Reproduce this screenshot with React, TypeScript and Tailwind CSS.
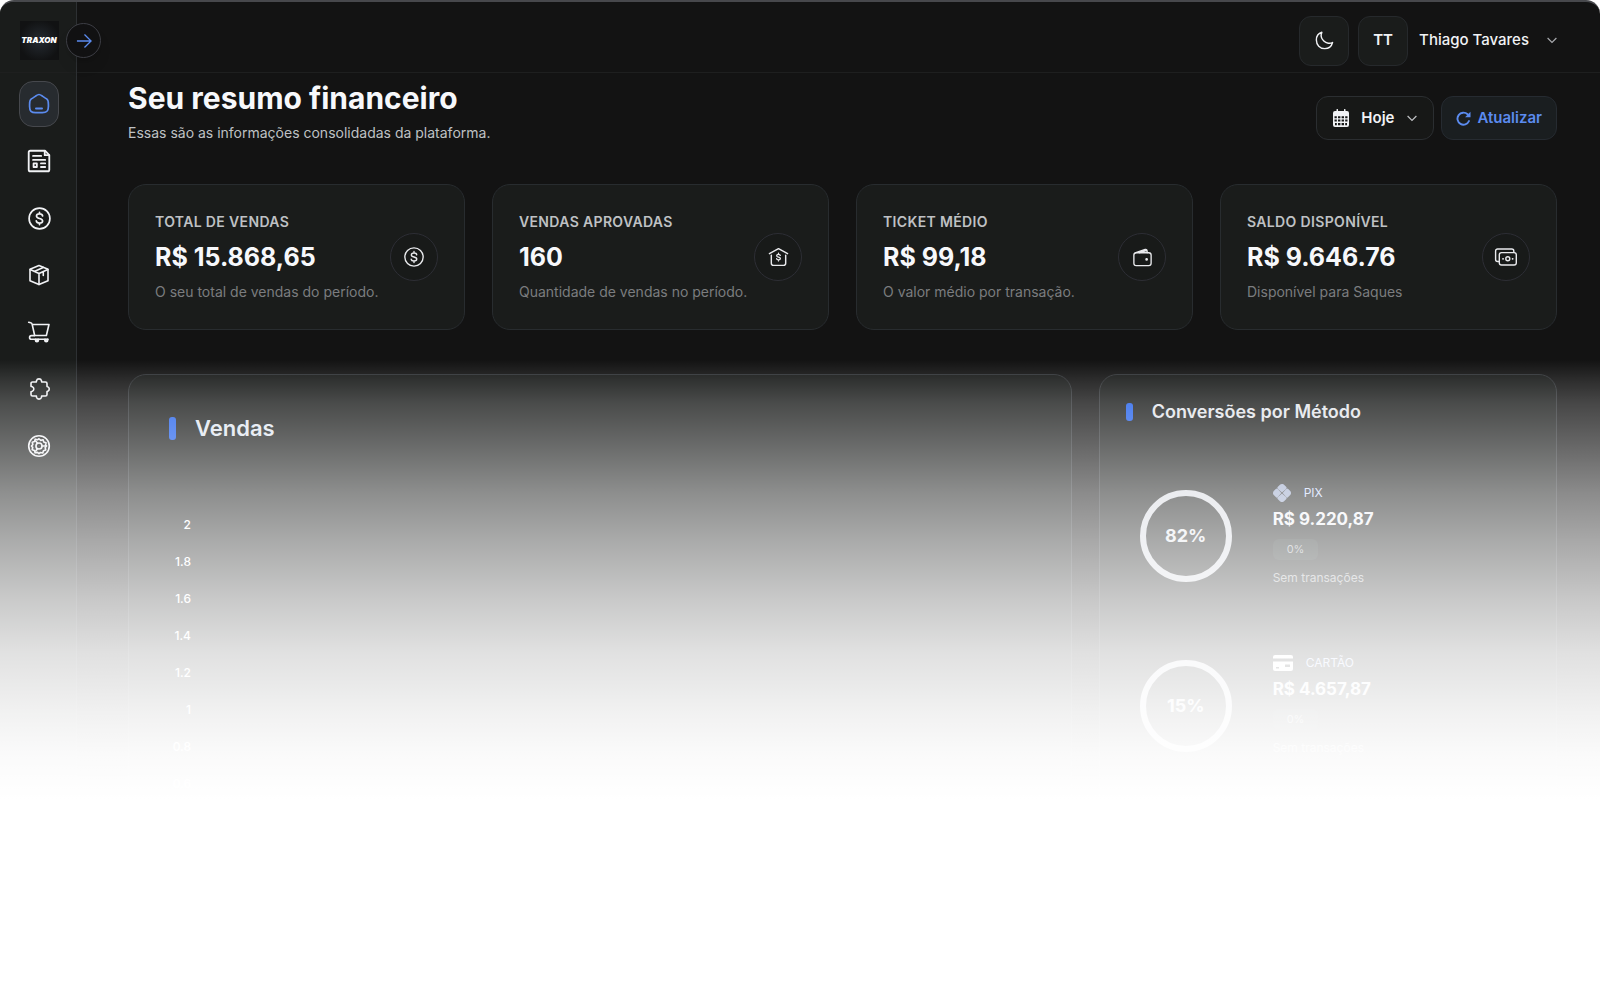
import type { ReactNode } from "react";

type IconProps = { size?: number; className?: string };

function Line({ size = 22, className, width = 1.5, children }: IconProps & { width?: number; children: ReactNode }) {
  return (
    <svg
      width={size}
      height={size}
      viewBox="0 0 24 24"
      fill="none"
      stroke="currentColor"
      strokeWidth={width}
      strokeLinecap="round"
      strokeLinejoin="round"
      className={className}
      aria-hidden="true"
    >
      {children}
    </svg>
  );
}

const HomeIcon = () => (
  <Line size={24} width={1.7}>
    <path d="M2.600 12.400c0-2.900 0-4 1.400-5.200.4-.4.8-.6 1.600-1.100l3-2c1.600-1.100 2.300-1.600 3.400-1.600s1.800.5 3.400 1.600l3 2c.8.500 1.200.7 1.600 1.100 1.400 1.200 1.400 2.300 1.400 5.200v2.200c0 4.500-1.600 6.100-6 6.100H8.600c-4.400 0-6-1.600-6-6.100z" />
    <path d="M9 16.600h6" strokeWidth={2} />
  </Line>
);

const ReportIcon = () => (
  <Line size={26} width={1.7}>
    <path d="M4 2.500h13.500l4 4V20a1.500 1.500 0 0 1-1.500 1.500H4A1.500 1.500 0 0 1 2.500 20V4A1.500 1.500 0 0 1 4 2.500z" />
    <path d="M17.300 2.700v3.900h4" />
    <path d="M6.500 7.300h7.500M6.500 11h11.200M13.800 14.200h3.900M13.800 17.500h3.900M7 14.200h3v3.300H7z" />
  </Line>
);

const DollarIcon = ({ size = 24, width = 1.6 }: { size?: number; width?: number }) => (
  <Line size={size} width={width}>
    <circle cx="12" cy="12" r="10" />
    <path d="M12 6v1.600m0 8.800V18M15 9.600c-.2-1.200-1.400-2-3-2s-2.900.7-2.900 2.100c0 1.500 1.300 1.900 2.900 2.300s3 .8 3 2.300c0 1.400-1.300 2.100-3 2.100s-2.900-.8-3.100-2.100" />
  </Line>
);

const BoxIcon = () => (
  <Line size={24} width={1.6}>
    <path d="M12 2.500l9 3.800v11.400l-9 3.900-9-3.900V6.300z" />
    <path d="M3.200 6.500L12 10.600l8.800-4.100M12 10.600v10.800M7.300 8.400l8.900-4M16.300 8.900v3.600" />
  </Line>
);

const CartIcon = () => (
  <Line size={26} width={1.5}>
    <path d="M2.500 3l1.800.5c.8.200 1.200.7 1.400 1.500L8 15.200h10.800l2.400-10.100H5.800" />
    <path d="M8 15.300H5a1.700 1.700 0 0 0 0 3.400h15.300" />
    <path d="M9 19v.6a1.100 1.100 0 0 0 2.200 0V19M17.600 19v.6a1.100 1.100 0 0 0 2.200 0V19" strokeWidth={2} />
  </Line>
);

const PuzzleIcon = () => (
  <Line size={24} width={1.6}>
    <path d="M4 6.500A1.500 1.500 0 0 1 5.500 5h3.700c.4-.3.200-.7.300-1.200a2.600 2.600 0 0 1 5 0c.1.500-.1.900.3 1.200h3.700A1.500 1.500 0 0 1 20 6.500v2.900c.2.400.7.300 1 .5a2.400 2.400 0 0 1 0 4.200c-.3.200-.8.100-1 .5v2.900a1.500 1.500 0 0 1-1.500 1.500h-3.700c-.4.300-.2.700-.3 1.200a2.600 2.600 0 0 1-5 0c-.1-.5.100-.9-.3-1.200H5.500A1.500 1.500 0 0 1 4 17.500v-2.700c.3-.4.800-.3 1.300-.5a2.500 2.500 0 0 0 0-4.600C4.800 9.500 4.300 9.600 4 9.200z" />
  </Line>
);

const GearIcon = () => (
  <Line size={26} width={1.5}>
    <circle cx="12" cy="12" r="9.500" />
    <path d="M12 5.300l1.600 1.500 2.200-.5.600 2.100 2.100.7-.5 2.200L19 12l-1.300 1.400.5 2.200-2.100.7-.6 2.100-2.200-.4L12 19l-1.400-1.100-2.200.4-.6-2.100-2.100-.7.5-2.200L5 12l1.300-1.300-.5-2.200 2.100-.7.600-2.100 2.100.6z" />
    <circle cx="12" cy="12" r="2.800" />
    <path d="M10.600 9.500L9 7.400M10.600 14.500L9 16.600M14.800 12h3" />
  </Line>
);

const HouseDollarIcon = () => (
  <Line size={23} width={1.5}>
    <path d="M2.500 8L12 2.800 21.500 8" />
    <path d="M4.500 9.500V18a2.200 2.200 0 0 0 2.200 2.200h10.600a2.200 2.200 0 0 0 2.200-2.200V9.500" />
    <path d="M12 7.400v1.200m0 5.800v1.200M13.900 9.900c-.2-.8-.9-1.200-1.900-1.200s-1.900.4-1.900 1.400.8 1.200 1.900 1.500 2 .5 2 1.500-.9 1.400-2 1.400-1.900-.5-2-1.300" strokeWidth={1.3} />
  </Line>
);

const WalletIcon = () => (
  <Line size={23} width={1.4}>
    <rect x="3" y="7" width="18" height="13.500" rx="2.500" />
    <path d="M5 7l9.800-3.400c.9-.3 1.700.2 1.900 1.100L17 7M9 7l7-2.300" />
    <circle cx="16.300" cy="14" r=".7" fill="currentColor" />
  </Line>
);

const CashIcon = () => (
  <Line size={24} width={1.4}>
    <rect x="5.300" y="7.600" width="17" height="12.400" rx="2.200" />
    <path d="M19.800 7.400V6a2 2 0 0 0-2-2H3.600a2 2 0 0 0-2 2v8.500a2 2 0 0 0 2 2h1.500" />
    <circle cx="13.800" cy="13.800" r="2" />
    <path d="M9 13.800h.1M18.600 13.800h.1" strokeWidth={1.8} />
  </Line>
);

const MoonIcon = () => (
  <Line size={21} width={1.6}>
    <path d="M21.200 14.300C18.500 15.800 14 15.500 11.200 12.700 8.600 10.100 7.500 6 9 2.600 5.200 3.700 2.700 7 2.700 11.500c0 5.500 4 9.800 9.500 9.800 4.300 0 7.900-2.700 9-7z" />
  </Line>
);

const Chevron = ({ className }: IconProps) => (
  <svg width="10" height="7" viewBox="0 0 10 7" fill="none" stroke="currentColor" strokeWidth="1.200" className={className} aria-hidden="true">
    <path d="M.6 1L5 5.400 9.400 1" />
  </svg>
);

const RefreshIcon = () => (
  <svg width="15" height="15" viewBox="0 0 15 15" fill="none" aria-hidden="true">
    <path d="M11.600 3.300A6 6 0 1 0 13 10" stroke="currentColor" strokeWidth="1.900" strokeLinecap="round" />
    <path d="M14.500.8v5.400H9.100z" fill="currentColor" />
  </svg>
);

const CalendarIcon = () => (
  <svg width="16" height="18" viewBox="0 0 16 18" aria-hidden="true">
    <path d="M2 2h1.500V.7a.7.7 0 0 1 1.500 0V2h6V.7a.7.7 0 0 1 1.500 0V2H14a2 2 0 0 1 2 2v12a2 2 0 0 1-2 2H2a2 2 0 0 1-2-2V4a2 2 0 0 1 2-2z" fill="currentColor" />
    <path d="M1.500 7.200h2.300v2H1.500zM5 7.200h2.400v2H5zM8.600 7.200H11v2H8.600zM12.200 7.200h2.300v2h-2.300zM1.500 10.600h2.300v2H1.500zM5 10.600h2.400v2H5zM8.600 10.600H11v2H8.600zM12.200 10.600h2.300v2h-2.300zM2 14h1.800v2.200H2zM5 14h2.400v2.200H5zM8.600 14H11v2.200H8.600zM12.200 14H14v2.200h-1.800z" fill="#161717" />
  </svg>
);

const PixIcon = () => (
  <svg width="18" height="18" viewBox="0 0 18 18" fill="#b4c6f2" fillOpacity="0.8" aria-hidden="true">
    <path d="M9 0c1 0 1.600.300 2.300 1l1.800 1.800c.7.700.7 1.500 0 2.200L9 8.500 4.900 5c-.7-.7-.7-1.500 0-2.200L6.700 1C7.400.3 8 0 9 0z" />
    <path d="M9 18c1 0 1.600-.3 2.300-1l1.800-1.800c.7-.7.7-1.500 0-2.200L9 9.500 4.900 13c-.7.700-.7 1.500 0 2.200L6.700 17c.7.700 1.300 1 2.300 1z" />
    <path d="M0 9c0-1 .3-1.600 1-2.300l1.800-1.800c.7-.7 1.300-.7 2 0L8.400 9l-3.600 4.100c-.7.700-1.300.7-2 0L1 11.300C.3 10.600 0 10 0 9z" />
    <path d="M18 9c0-1-.3-1.600-1-2.300l-1.800-1.800c-.7-.7-1.300-.7-2 0L9.600 9l3.600 4.100c.7.700 1.300.7 2 0l1.800-1.800c.7-.7 1-1.300 1-2.300z" />
  </svg>
);

const CardIcon = () => (
  <svg width="20" height="16" viewBox="0 0 20 16" fill="#ffffff" aria-hidden="true">
    <path d="M2 0h16a2 2 0 0 1 2 2v1.500H0V2a2 2 0 0 1 2-2z" />
    <path fillRule="evenodd" d="M0 6.500h20V14a2 2 0 0 1-2 2H2a2 2 0 0 1-2-2zm3 5.500v1.500h3V12zm9-2.500V12h5V9.500z" />
  </svg>
);

const navItems = [
  { label: "Início", icon: <HomeIcon />, active: true },
  { label: "Relatórios", icon: <ReportIcon /> },
  { label: "Financeiro", icon: <DollarIcon size={25} /> },
  { label: "Produtos", icon: <BoxIcon /> },
  { label: "Vendas", icon: <CartIcon /> },
  { label: "Integrações", icon: <PuzzleIcon /> },
  { label: "Configurações", icon: <GearIcon /> },
];

const stats = [
  { label: "TOTAL DE VENDAS", value: "R$ 15.868,65", note: "O seu total de vendas do período.", icon: <DollarIcon size={22} width={1.5} /> },
  { label: "VENDAS APROVADAS", value: "160", note: "Quantidade de vendas no período.", icon: <HouseDollarIcon /> },
  { label: "TICKET MÉDIO", value: "R$ 99,18", note: "O valor médio por transação.", icon: <WalletIcon /> },
  { label: "SALDO DISPONÍVEL", value: "R$ 9.646.76", note: "Disponível para Saques", icon: <CashIcon /> },
];

const methods = [
  { name: "PIX", percent: "82%", value: "R$ 9.220,87", icon: <PixIcon /> },
  { name: "CARTÃO", percent: "15%", value: "R$ 4.657,87", icon: <CardIcon /> },
];

const ticks = ["2", "1.8", "1.6", "1.4", "1.2", "1", "0.8", "0.6"];

function Sidebar() {
  return (
    <aside className="relative w-[77px] shrink-0 border-r border-[#2d3033] bg-[#1a1c1b]">
      <div className="flex h-[71px] items-center justify-center border-b border-[#1e1f1f] pt-[6px] pl-[2px]">
        <div className="flex size-[39px] items-center justify-center bg-[radial-gradient(circle,#252b31_0%,#111213_75%)] text-[8px] font-black text-white italic">
          TRAXON
        </div>
      </div>
      <button
        type="button"
        aria-label="Expandir menu"
        className="absolute top-[21px] -right-[25px] z-10 flex size-[35px] items-center justify-center rounded-full border border-[#3d3e45] bg-[#111112] text-[#5b8bef] shadow-lg"
      >
        <svg width="16" height="16" viewBox="0 0 17 17" fill="none" stroke="currentColor" strokeWidth="1.400" aria-hidden="true">
          <path d="M1 8.500h15M9 1.500l7 7-7 7" />
        </svg>
      </button>
      <nav className="flex flex-col items-center gap-[11px] pt-2 pl-[2px]">
        {navItems.map((item) => (
          <a
            key={item.label}
            href="#"
            aria-label={item.label}
            className={
              item.active
                ? "flex h-[46px] w-10 items-center justify-center rounded-[14px] border border-[#46484d] bg-[#272b2f] text-[#5b8bef]"
                : "flex h-[46px] w-10 items-center justify-center text-[#f1f2f5]"
            }
          >
            {item.icon}
          </a>
        ))}
      </nav>
    </aside>
  );
}

function Header() {
  return (
    <header className="flex h-[71px] items-center justify-end border-b border-[#1e1f1f] pt-[7px] pr-[43px]">
      <button
        type="button"
        aria-label="Alternar tema"
        className="mr-[9px] flex size-[50px] items-center justify-center rounded-xl border border-[#26292c] bg-[#1a1c1b] text-[#f1f2f5]"
      >
        <MoonIcon />
      </button>
      <button type="button" className="flex items-center text-[15px] font-medium text-[#f1f2f5]">
        <span className="flex size-[50px] items-center justify-center rounded-xl border border-[#26292c] bg-[#1a1c1b] font-semibold">
          TT
        </span>
        <span className="ml-[11px]">Thiago Tavares</span>
        <Chevron className="ml-[18px] text-[#a8aaae]" />
      </button>
    </header>
  );
}

function StatCard({ label, value, note, icon }: (typeof stats)[number]) {
  return (
    <article className="flex items-center justify-between rounded-[18px] border border-[#282c2f] bg-[#1a1c1b] px-[26px] py-[25px]">
      <div>
        <h2 className="text-[14px] leading-6 font-semibold tracking-wide text-[#bfc1c4]">{label}</h2>
        <p className="mt-1 text-[25px] leading-[38px] font-bold text-[#f7f8fb]">{value}</p>
        <p className="mt-1 text-[14px] leading-6 text-[#7b7c7f]">{note}</p>
      </div>
      <span className="flex size-12 shrink-0 items-center justify-center rounded-full border border-[#2d2e35] bg-[#181a19] text-[#e9eaed]">
        {icon}
      </span>
    </article>
  );
}

function SalesPanel() {
  return (
    <section className="col-span-8 rounded-[18px] border border-[#303336] bg-[#171918] px-10 pt-[39px] pb-[100px]">
      <div className="flex items-center gap-[19px]">
        <span className="h-[23px] w-[7px] rounded-[3px] bg-[#1f5eea]" />
        <h2 className="text-[22px] leading-7 font-semibold text-[#dfe5ef]">Vendas</h2>
      </div>
      <ul className="mt-16 flex w-[22px] flex-col text-right text-[12px] font-medium text-white">
        {ticks.map((t) => (
          <li key={t} className="h-[37px] leading-[37px]">{t}</li>
        ))}
      </ul>
    </section>
  );
}

function Donut({ percent }: { percent: string }) {
  return (
    <div className="relative flex size-[94px] items-center justify-center">
      <svg viewBox="0 0 94 94" className="absolute inset-0" fill="none" aria-hidden="true">
        <circle cx="47" cy="47" r="43" stroke="#d6d9e0" strokeWidth="6" />
      </svg>
      <span className="text-[18px] font-bold text-[#e4e7ed]">{percent}</span>
    </div>
  );
}

function MethodsPanel() {
  return (
    <section className="col-span-4 rounded-[18px] border border-[#303336] bg-[#171918] px-[26px] pt-[25px] pb-[160px]">
      <div className="flex items-center gap-[19px]">
        <span className="h-[18px] w-[7px] rounded-[3px] bg-[#1f5eea]" />
        <h2 className="text-[18px] leading-6 font-semibold text-[#e1e4ea]">Conversões por Método</h2>
      </div>
      <ul className="mt-[59px] flex flex-col gap-[65px] pl-[13px]">
        {methods.map((m) => (
          <li key={m.name} className="flex items-center gap-10">
            <Donut percent={m.percent} />
            <div className="flex flex-col items-start">
              <div className="flex h-5 items-center gap-[13px] text-[12px] text-[#c8d8ff]">
                {m.icon}
                <span>{m.name}</span>
              </div>
              <p className="mt-1 text-[17px] leading-6 font-bold text-[#eef0f5]">{m.value}</p>
              <span className="mt-2 rounded-md bg-[#202625] px-[14px] text-[11px] leading-[21px] text-[#a9acb0]">0%</span>
              <p className="mt-2 text-[12px] leading-5 text-[#a9acb0]">Sem transações</p>
            </div>
          </li>
        ))}
      </ul>
    </section>
  );
}

export default function App() {
  return (
    <div className="relative min-h-screen overflow-hidden bg-white font-[Inter,sans-serif]">
      <div className="flex min-h-screen overflow-hidden rounded-t-[14px] border-t-2 border-[#47484c] bg-[#131313]">
        <Sidebar />
        <div className="min-w-0 flex-1">
          <Header />
          <main className="pt-[7px] pr-[43px] pl-[51px]">
            <div className="flex items-center justify-between">
              <div>
                <h1 className="text-[30px] leading-9 font-bold text-[#f7f8fb]">Seu resumo financeiro</h1>
                <p className="mt-[5px] text-[14px] leading-6 text-[#bfc1c4]">
                  Essas são as informações consolidadas da plataforma.
                </p>
              </div>
              <div className="mt-[11px] flex gap-[7px] text-[15px] font-semibold">
                <button
                  type="button"
                  className="flex h-11 items-center rounded-xl border border-[#2b2e31] bg-[#171817] px-4 text-[#f1f2f5]"
                >
                  <CalendarIcon />
                  <span className="mr-[13px] ml-3">Hoje</span>
                  <Chevron className="text-[#c0c2c5]" />
                </button>
                <button
                  type="button"
                  className="flex h-11 items-center gap-[6px] rounded-xl border border-[#262b31] bg-[#1a1e20] px-[14px] text-[#5b8bef]"
                >
                  <RefreshIcon />
                  Atualizar
                </button>
              </div>
            </div>
            <div className="mt-[39px] grid grid-cols-4 gap-[27px]">
              {stats.map((s) => (
                <StatCard key={s.label} {...s} />
              ))}
            </div>
            <div className="mt-11 grid grid-cols-12 gap-[27px]">
              <SalesPanel />
              <MethodsPanel />
            </div>
          </main>
        </div>
      </div>
      <div className="pointer-events-none absolute inset-0 z-20 bg-[linear-gradient(to_bottom,transparent_360px,rgb(255_255_255/0.11)_380px,rgb(255_255_255/0.22)_403px,rgb(255_255_255/0.36)_447px,rgb(255_255_255/0.51)_493px,rgb(255_255_255/0.63)_540px,rgb(255_255_255/0.77)_600px,rgb(255_255_255/0.87)_653px,rgb(255_255_255/0.94)_713px,rgb(255_255_255/0.98)_755px,white_800px)]" />
    </div>
  );
}
